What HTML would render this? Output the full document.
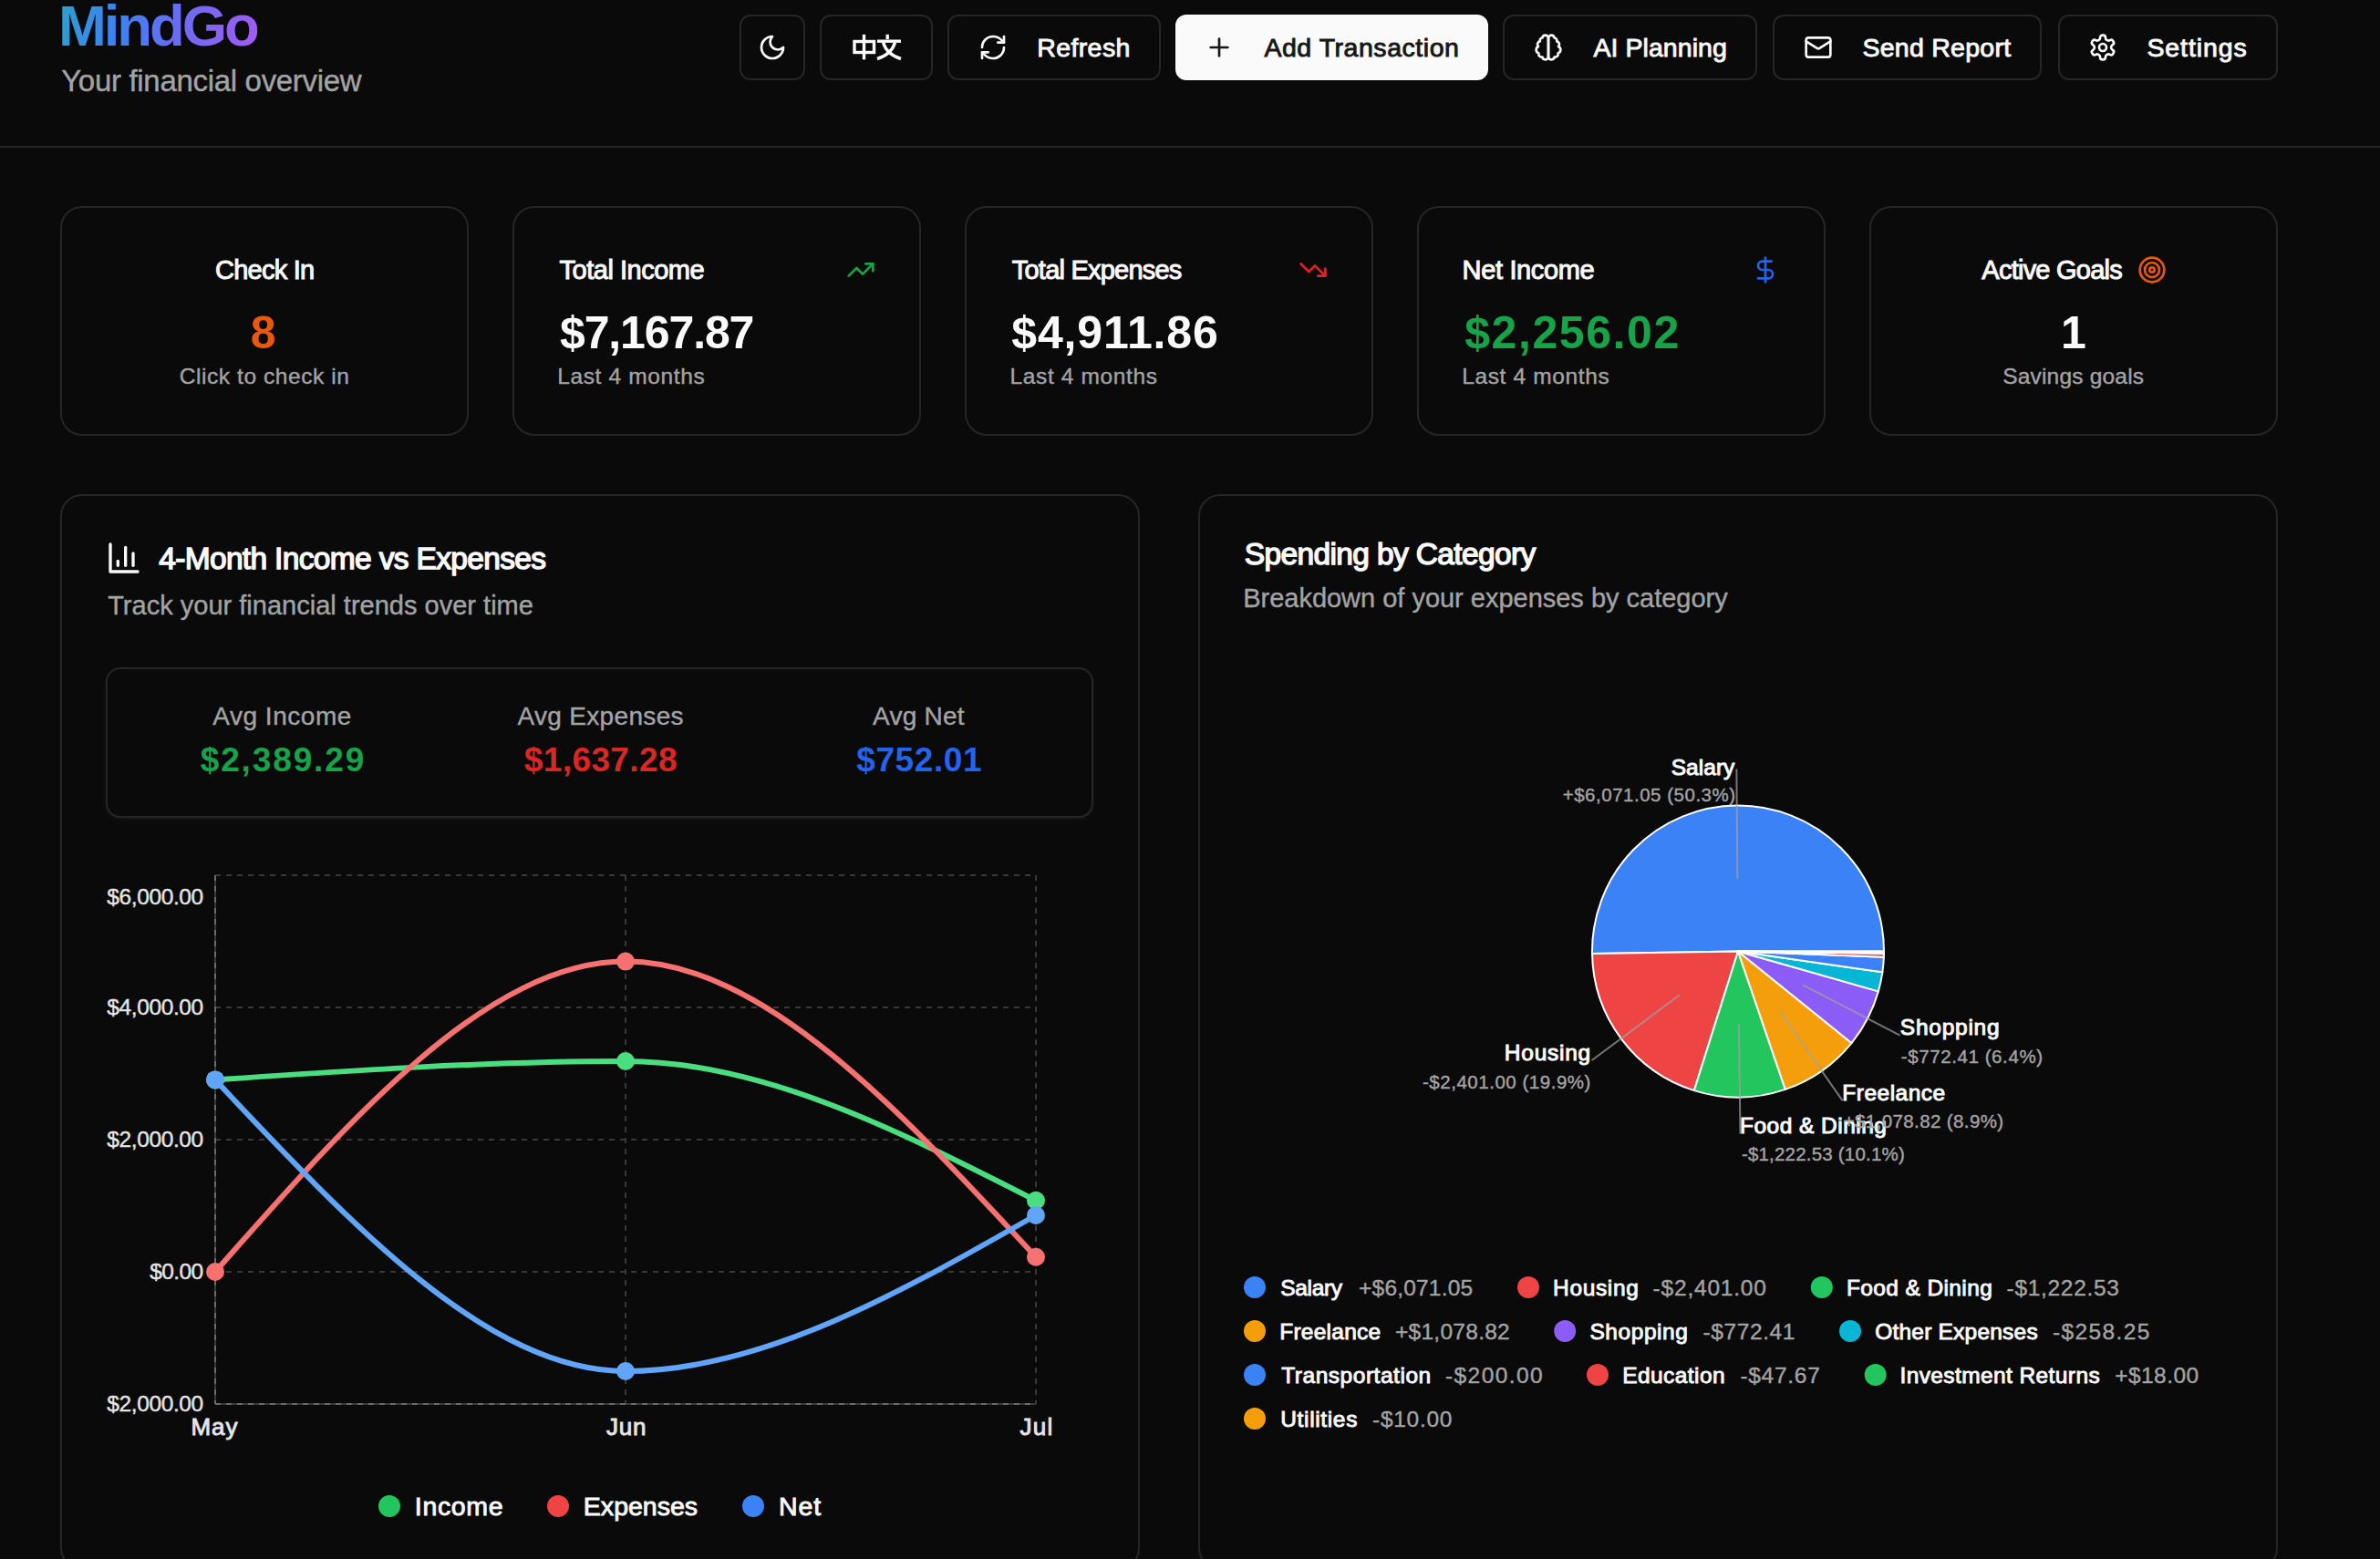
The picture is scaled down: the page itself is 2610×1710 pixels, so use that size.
<!DOCTYPE html>
<html><head><meta charset="utf-8"><title>MindGo</title>
<style>
html,body{margin:0;padding:0;background:#0a0a0a;width:2610px;height:1710px;overflow:hidden;}
body{position:relative;font-family:"Liberation Sans",sans-serif;}
.t{position:absolute;white-space:nowrap;line-height:0;}
.grad{background:linear-gradient(100deg,#2fa0cc 0%,#3b82f6 30%,#6a6cf3 60%,#a35bf5 100%);-webkit-background-clip:text;background-clip:text;color:transparent;line-height:1;}
.bx{position:absolute;box-sizing:border-box;border:2px solid;}
.ov{position:absolute;left:0;top:0;}
.ic{position:absolute;}
</style></head><body>
<div class="bx" style="left:0px;top:160px;width:2610px;height:2px;border-radius:0px;background:#262626;border-color:transparent;border:none;"></div><div class="bx" style="left:811px;top:16px;width:72px;height:72px;border-radius:12px;background:#0a0a0a;border-color:#262626;"></div><div class="bx" style="left:899px;top:16px;width:124px;height:72px;border-radius:12px;background:#0a0a0a;border-color:#262626;"></div><div class="bx" style="left:1039px;top:16px;width:234px;height:72px;border-radius:12px;background:#0a0a0a;border-color:#262626;"></div><div class="bx" style="left:1289px;top:16px;width:343px;height:72px;border-radius:12px;background:#fafafa;border-color:#fafafa;"></div><div class="bx" style="left:1648px;top:16px;width:279px;height:72px;border-radius:12px;background:#0a0a0a;border-color:#262626;"></div><div class="bx" style="left:1944px;top:16px;width:295px;height:72px;border-radius:12px;background:#0a0a0a;border-color:#262626;"></div><div class="bx" style="left:2257px;top:16px;width:241px;height:72px;border-radius:12px;background:#0a0a0a;border-color:#262626;"></div><div class="bx" style="left:66px;top:226px;width:448px;height:252px;border-radius:24px;background:#0a0a0a;border-color:#262626;"></div><div class="bx" style="left:562px;top:226px;width:448px;height:252px;border-radius:24px;background:#0a0a0a;border-color:#262626;"></div><div class="bx" style="left:1058px;top:226px;width:448px;height:252px;border-radius:24px;background:#0a0a0a;border-color:#262626;"></div><div class="bx" style="left:1554px;top:226px;width:448px;height:252px;border-radius:24px;background:#0a0a0a;border-color:#262626;"></div><div class="bx" style="left:2050px;top:226px;width:448px;height:252px;border-radius:24px;background:#0a0a0a;border-color:#262626;"></div><div class="bx" style="left:66px;top:542px;width:1184px;height:1180px;border-radius:24px;background:#0a0a0a;border-color:#262626;"></div><div class="bx" style="left:1314px;top:542px;width:1184px;height:1180px;border-radius:24px;background:#0a0a0a;border-color:#262626;"></div><div class="bx" style="left:116px;top:732px;width:1083px;height:165px;border-radius:16px;background:#0a0a0a;border-color:#262626;box-shadow:0 2px 5px rgba(255,255,255,0.05),0 0 4px rgba(255,255,255,0.03);"></div>
<svg class="ov" width="2610" height="1710" viewBox="0 0 2610 1710"><line x1="236" y1="960" x2="1136" y2="960" stroke="#383838" stroke-width="2" stroke-dasharray="6 6"/><line x1="236" y1="1105" x2="1136" y2="1105" stroke="#383838" stroke-width="2" stroke-dasharray="6 6"/><line x1="236" y1="1250" x2="1136" y2="1250" stroke="#383838" stroke-width="2" stroke-dasharray="6 6"/><line x1="236" y1="1395" x2="1136" y2="1395" stroke="#383838" stroke-width="2" stroke-dasharray="6 6"/><line x1="686" y1="960" x2="686" y2="1540" stroke="#383838" stroke-width="2" stroke-dasharray="6 6"/><line x1="1136" y1="960" x2="1136" y2="1540" stroke="#383838" stroke-width="2" stroke-dasharray="6 6"/><line x1="236" y1="960" x2="236" y2="1540" stroke="#3a3a3a" stroke-width="2"/><line x1="236" y1="960" x2="236" y2="1540" stroke="#6b6b6b" stroke-width="2" stroke-dasharray="6 6"/><line x1="236" y1="1540" x2="1136" y2="1540" stroke="#3a3a3a" stroke-width="2"/><line x1="236" y1="1540" x2="1136" y2="1540" stroke="#6b6b6b" stroke-width="2" stroke-dasharray="6 6"/><path d="M236,1184.4C386.00,1174.20,536.00,1164.00,686,1164C836.00,1164.00,986.00,1240.40,1136,1316.8" fill="none" stroke="#4ade80" stroke-width="6" stroke-linecap="round"/><circle cx="236" cy="1184.4" r="10" fill="#4ade80"/><circle cx="686" cy="1164" r="10" fill="#4ade80"/><circle cx="1136" cy="1316.8" r="10" fill="#4ade80"/><path d="M236,1395C386.00,1224.80,536.00,1054.60,686,1054.6C836.00,1054.60,986.00,1216.70,1136,1378.8" fill="none" stroke="#f87171" stroke-width="6" stroke-linecap="round"/><circle cx="236" cy="1395" r="10" fill="#f87171"/><circle cx="686" cy="1054.6" r="10" fill="#f87171"/><circle cx="1136" cy="1378.8" r="10" fill="#f87171"/><path d="M236,1184.4C386.00,1344.20,536.00,1504.00,686,1504C836.00,1504.00,986.00,1418.50,1136,1333" fill="none" stroke="#60a5fa" stroke-width="6" stroke-linecap="round"/><circle cx="236" cy="1184.4" r="10" fill="#60a5fa"/><circle cx="686" cy="1504" r="10" fill="#60a5fa"/><circle cx="1136" cy="1333" r="10" fill="#60a5fa"/><circle cx="427" cy="1652" r="12" fill="#22c55e"/><circle cx="612" cy="1652" r="12" fill="#ef4444"/><circle cx="826" cy="1652" r="12" fill="#3b82f6"/><path d="M1906,1043.5L2066.00,1043.50A160,160 0 1 0 1746.02,1046.10Z" fill="#3b82f6" stroke="#ffffff" stroke-width="2" stroke-linejoin="round"/><path d="M1906,1043.5L1746.02,1046.10A160,160 0 0 0 1857.84,1196.08Z" fill="#ef4444" stroke="#ffffff" stroke-width="2" stroke-linejoin="round"/><path d="M1906,1043.5L1857.84,1196.08A160,160 0 0 0 1957.87,1194.86Z" fill="#22c55e" stroke="#ffffff" stroke-width="2" stroke-linejoin="round"/><path d="M1906,1043.5L1957.87,1194.86A160,160 0 0 0 2030.46,1144.04Z" fill="#f59e0b" stroke="#ffffff" stroke-width="2" stroke-linejoin="round"/><path d="M1906,1043.5L2030.46,1144.04A160,160 0 0 0 2059.87,1087.37Z" fill="#8b5cf6" stroke="#ffffff" stroke-width="2" stroke-linejoin="round"/><path d="M1906,1043.5L2059.87,1087.37A160,160 0 0 0 2064.36,1066.36Z" fill="#06b6d4" stroke="#ffffff" stroke-width="2" stroke-linejoin="round"/><path d="M1906,1043.5L2064.36,1066.36A160,160 0 0 0 2065.88,1049.80Z" fill="#3b82f6" stroke="#ffffff" stroke-width="2" stroke-linejoin="round"/><path d="M1906,1043.5L2065.88,1049.80A160,160 0 0 0 2065.98,1045.83Z" fill="#ef4444" stroke="#ffffff" stroke-width="2" stroke-linejoin="round"/><path d="M1906,1043.5L2065.98,1045.83A160,160 0 0 0 2066.00,1044.33Z" fill="#22c55e" stroke="#ffffff" stroke-width="2" stroke-linejoin="round"/><path d="M1906,1043.5L2066.00,1044.33A160,160 0 0 0 2066.00,1043.50Z" fill="#f59e0b" stroke="#ffffff" stroke-width="2" stroke-linejoin="round"/><line x1="1905.35" y1="963.50" x2="1904.38" y2="843.51" stroke="#a3a3a3" stroke-opacity="0.7" stroke-width="2"/><line x1="1841.86" y1="1091.32" x2="1745.66" y2="1163.04" stroke="#a3a3a3" stroke-opacity="0.7" stroke-width="2"/><line x1="1906.98" y1="1123.49" x2="1908.45" y2="1243.49" stroke="#a3a3a3" stroke-opacity="0.7" stroke-width="2"/><line x1="1951.88" y1="1109.04" x2="2020.70" y2="1207.34" stroke="#a3a3a3" stroke-opacity="0.7" stroke-width="2"/><line x1="1977.01" y1="1080.34" x2="2083.53" y2="1135.61" stroke="#a3a3a3" stroke-opacity="0.7" stroke-width="2"/><circle cx="1376" cy="1412" r="12" fill="#3b82f6"/><circle cx="1676" cy="1412" r="12" fill="#ef4444"/><circle cx="1997.8" cy="1412" r="12" fill="#22c55e"/><circle cx="1376" cy="1460" r="12" fill="#f59e0b"/><circle cx="1716.2" cy="1460" r="12" fill="#8b5cf6"/><circle cx="2029" cy="1460" r="12" fill="#06b6d4"/><circle cx="1376" cy="1508" r="12" fill="#3b82f6"/><circle cx="1752" cy="1508" r="12" fill="#ef4444"/><circle cx="2056.7" cy="1508" r="12" fill="#22c55e"/><circle cx="1376" cy="1556" r="12" fill="#f59e0b"/></svg>
<svg class="ic" style="left:831px;top:36px" width="32" height="32" viewBox="0 0 24 24" fill="none" stroke="#fafafa" stroke-width="2" stroke-linecap="round" stroke-linejoin="round"><path d="M12 3a6 6 0 0 0 9 9 9 9 0 1 1-9-9Z"/></svg><svg class="ic" style="left:1073px;top:36px" width="32" height="32" viewBox="0 0 24 24" fill="none" stroke="#fafafa" stroke-width="2" stroke-linecap="round" stroke-linejoin="round"><path d="M3 12a9 9 0 0 1 9-9 9.75 9.75 0 0 1 6.74 2.74L21 8"/><path d="M21 3v5h-5"/><path d="M21 12a9 9 0 0 1-9 9 9.75 9.75 0 0 1-6.74-2.74L3 16"/><path d="M8 16H3v5"/></svg><svg class="ic" style="left:1321px;top:36px" width="32" height="32" viewBox="0 0 24 24" fill="none" stroke="#171717" stroke-width="2" stroke-linecap="round" stroke-linejoin="round"><path d="M5 12h14"/><path d="M12 5v14"/></svg><svg class="ic" style="left:1682px;top:36px" width="32" height="32" viewBox="0 0 24 24" fill="none" stroke="#fafafa" stroke-width="2" stroke-linecap="round" stroke-linejoin="round"><path d="M9.5 2A2.5 2.5 0 0 1 12 4.5v15a2.5 2.5 0 0 1-4.96.44 2.5 2.5 0 0 1-2.96-3.08 3 3 0 0 1-.34-5.58 2.5 2.5 0 0 1 1.32-4.24 2.5 2.5 0 0 1 1.98-3A2.5 2.5 0 0 1 9.5 2Z"/><path d="M14.5 2A2.5 2.5 0 0 0 12 4.5v15a2.5 2.5 0 0 0 4.96.44 2.5 2.5 0 0 0 2.96-3.08 3 3 0 0 0 .34-5.58 2.5 2.5 0 0 0-1.32-4.24 2.5 2.5 0 0 0-1.98-3A2.5 2.5 0 0 0 14.5 2Z"/></svg><svg class="ic" style="left:1978px;top:36px" width="32" height="32" viewBox="0 0 24 24" fill="none" stroke="#fafafa" stroke-width="2" stroke-linecap="round" stroke-linejoin="round"><rect width="20" height="16" x="2" y="4" rx="2"/><path d="m22 7-8.97 5.7a1.94 1.94 0 0 1-2.06 0L2 7"/></svg><svg class="ic" style="left:2290px;top:36px" width="32" height="32" viewBox="0 0 24 24" fill="none" stroke="#fafafa" stroke-width="2" stroke-linecap="round" stroke-linejoin="round"><path d="M12.22 2h-.44a2 2 0 0 0-2 2v.18a2 2 0 0 1-1 1.73l-.43.25a2 2 0 0 1-2 0l-.15-.08a2 2 0 0 0-2.73.73l-.22.38a2 2 0 0 0 .73 2.73l.15.1a2 2 0 0 1 1 1.72v.51a2 2 0 0 1-1 1.74l-.15.09a2 2 0 0 0-.73 2.73l.22.38a2 2 0 0 0 2.73.73l.15-.08a2 2 0 0 1 2 0l.43.25a2 2 0 0 1 1 1.73V20a2 2 0 0 0 2 2h.44a2 2 0 0 0 2-2v-.18a2 2 0 0 1 1-1.73l.43-.25a2 2 0 0 1 2 0l.15.08a2 2 0 0 0 2.73-.73l.22-.39a2 2 0 0 0-.73-2.73l-.15-.08a2 2 0 0 1-1-1.74v-.5a2 2 0 0 1 1-1.74l.15-.09a2 2 0 0 0 .73-2.73l-.22-.38a2 2 0 0 0-2.73-.73l-.15.08a2 2 0 0 1-2 0l-.43-.25a2 2 0 0 1-1-1.73V4a2 2 0 0 0-2-2z"/><circle cx="12" cy="12" r="3"/></svg><svg class="ic" style="left:930px;top:34px" width="64" height="36" viewBox="0 0 64 36" fill="none" stroke="#fafafa" stroke-width="3.4" stroke-linecap="butt"><rect x="7" y="11.5" width="21.5" height="12" /><line x1="17.5" y1="3.8" x2="17.5" y2="31.3"/><line x1="43.2" y1="3.8" x2="43.2" y2="9"/><line x1="32" y1="11.2" x2="58" y2="11.2"/><path d="M38.5 12.5 C41 21 48 27.5 58 30.5"/><path d="M51.5 12.5 C49 21 42 27.5 32 30.5"/></svg><svg class="ic" style="left:928px;top:280px" width="32" height="32" viewBox="0 0 24 24" fill="none" stroke="#16a34a" stroke-width="2" stroke-linecap="round" stroke-linejoin="round"><polyline points="22 7 13.5 15.5 8.5 10.5 2 17"/><polyline points="16 7 22 7 22 13"/></svg><svg class="ic" style="left:1424px;top:280px" width="32" height="32" viewBox="0 0 24 24" fill="none" stroke="#dc2626" stroke-width="2" stroke-linecap="round" stroke-linejoin="round"><polyline points="22 17 13.5 8.5 8.5 13.5 2 7"/><polyline points="16 17 22 17 22 11"/></svg><svg class="ic" style="left:1920px;top:280px" width="32" height="32" viewBox="0 0 24 24" fill="none" stroke="#2563eb" stroke-width="2" stroke-linecap="round" stroke-linejoin="round"><line x1="12" x2="12" y1="2" y2="22"/><path d="M17 5H9.5a3.5 3.5 0 0 0 0 7h5a3.5 3.5 0 0 1 0 7H6"/></svg><svg class="ic" style="left:2344px;top:280px" width="32" height="32" viewBox="0 0 24 24" fill="none" stroke="#ea580c" stroke-width="2" stroke-linecap="round" stroke-linejoin="round"><circle cx="12" cy="12" r="10"/><circle cx="12" cy="12" r="6"/><circle cx="12" cy="12" r="2"/></svg><svg class="ic" style="left:116px;top:592px" width="40" height="40" viewBox="0 0 24 24" fill="none" stroke="#fafafa" stroke-width="2" stroke-linecap="round" stroke-linejoin="round"><path d="M3 3v18h18"/><path d="M18 17V9"/><path d="M13 17V5"/><path d="M8 17v-3"/></svg>
<div class="t grad" style="left:64.00px;top:-2.75px;font-size:63.5px;letter-spacing:-3.101px;font-weight:700;">MindGo</div><div class="t" style="left:67.20px;top:88.87px;font-size:33px;letter-spacing:-0.312px;-webkit-text-stroke:0.4px currentColor;color:#a3a3a3;">Your financial overview</div><div class="t" style="left:1137.15px;top:52.12px;font-size:28.5px;letter-spacing:0.410px;-webkit-text-stroke:0.9px currentColor;color:#fafafa;">Refresh</div><div class="t" style="left:1386.45px;top:52.12px;font-size:28.5px;letter-spacing:0.534px;-webkit-text-stroke:0.9px currentColor;color:#171717;">Add Transaction</div><div class="t" style="left:1747.45px;top:52.12px;font-size:28.5px;letter-spacing:0.058px;-webkit-text-stroke:0.9px currentColor;color:#fafafa;">AI Planning</div><div class="t" style="left:2042.45px;top:52.12px;font-size:28.5px;letter-spacing:0.260px;-webkit-text-stroke:0.9px currentColor;color:#fafafa;">Send Report</div><div class="t" style="left:2354.45px;top:52.12px;font-size:28.5px;letter-spacing:0.910px;-webkit-text-stroke:0.9px currentColor;color:#fafafa;">Settings</div><div class="t" style="left:236.00px;top:296.15px;font-size:29px;letter-spacing:-0.759px;-webkit-text-stroke:1.0px currentColor;color:#fafafa;">Check In</div><div class="t" style="left:274.80px;top:365.38px;font-size:50px;letter-spacing:0.000px;font-weight:700;color:#ea580c;">8</div><div class="t" style="left:196.70px;top:412.51px;font-size:24.5px;letter-spacing:0.576px;-webkit-text-stroke:0.4px currentColor;color:#a3a3a3;">Click to check in</div><div class="t" style="left:613.50px;top:296.15px;font-size:29px;letter-spacing:-0.480px;-webkit-text-stroke:1.0px currentColor;color:#fafafa;">Total Income</div><div class="t" style="left:614.00px;top:365.38px;font-size:50px;letter-spacing:-1.129px;font-weight:700;color:#fafafa;">$7,167.87</div><div class="t" style="left:611.20px;top:412.51px;font-size:24.5px;letter-spacing:0.638px;-webkit-text-stroke:0.4px currentColor;color:#a3a3a3;">Last 4 months</div><div class="t" style="left:1109.80px;top:296.15px;font-size:29px;letter-spacing:-0.782px;-webkit-text-stroke:1.0px currentColor;color:#fafafa;">Total Expenses</div><div class="t" style="left:1109.30px;top:365.38px;font-size:50px;letter-spacing:0.854px;font-weight:700;color:#fafafa;">$4,911.86</div><div class="t" style="left:1107.50px;top:412.51px;font-size:24.5px;letter-spacing:0.638px;-webkit-text-stroke:0.4px currentColor;color:#a3a3a3;">Last 4 months</div><div class="t" style="left:1603.60px;top:296.15px;font-size:29px;letter-spacing:-0.351px;-webkit-text-stroke:1.0px currentColor;color:#fafafa;">Net Income</div><div class="t" style="left:1606.20px;top:365.38px;font-size:50px;letter-spacing:1.571px;font-weight:700;color:#16a34a;">$2,256.02</div><div class="t" style="left:1603.20px;top:412.51px;font-size:24.5px;letter-spacing:0.638px;-webkit-text-stroke:0.4px currentColor;color:#a3a3a3;">Last 4 months</div><div class="t" style="left:2173.30px;top:296.15px;font-size:29px;letter-spacing:-0.753px;-webkit-text-stroke:1.0px currentColor;color:#fafafa;">Active Goals</div><div class="t" style="left:2260.00px;top:365.38px;font-size:50px;letter-spacing:0.000px;font-weight:700;color:#fafafa;">1</div><div class="t" style="left:2196.20px;top:412.51px;font-size:24.5px;letter-spacing:0.193px;-webkit-text-stroke:0.4px currentColor;color:#a3a3a3;">Savings goals</div><div class="t" style="left:174.20px;top:612.89px;font-size:33.5px;letter-spacing:-0.658px;-webkit-text-stroke:1.4px currentColor;color:#fafafa;">4-Month Income vs Expenses</div><div class="t" style="left:118.20px;top:664.15px;font-size:29px;letter-spacing:0.011px;-webkit-text-stroke:0.4px currentColor;color:#a3a3a3;">Track your financial trends over time</div><div class="t" style="left:233.20px;top:785.90px;font-size:28px;letter-spacing:0.537px;-webkit-text-stroke:0.4px currentColor;color:#a3a3a3;">Avg Income</div><div class="t" style="left:567.45px;top:785.90px;font-size:28px;letter-spacing:0.329px;-webkit-text-stroke:0.4px currentColor;color:#a3a3a3;">Avg Expenses</div><div class="t" style="left:957.10px;top:785.90px;font-size:28px;letter-spacing:0.214px;-webkit-text-stroke:0.4px currentColor;color:#a3a3a3;">Avg Net</div><div class="t" style="left:219.70px;top:834.48px;font-size:37px;letter-spacing:1.872px;font-weight:700;color:#16a34a;">$2,389.29</div><div class="t" style="left:574.80px;top:834.48px;font-size:37px;letter-spacing:0.397px;font-weight:700;color:#dc2626;">$1,637.28</div><div class="t" style="left:939.25px;top:834.48px;font-size:37px;letter-spacing:0.589px;font-weight:700;color:#2563eb;">$752.01</div><div class="t" style="left:117.20px;top:983.51px;font-size:24.5px;letter-spacing:-0.371px;-webkit-text-stroke:0.4px currentColor;color:#e5e5e5;">$6,000.00</div><div class="t" style="left:117.20px;top:1104.71px;font-size:24.5px;letter-spacing:-0.371px;-webkit-text-stroke:0.4px currentColor;color:#e5e5e5;">$4,000.00</div><div class="t" style="left:117.20px;top:1250.01px;font-size:24.5px;letter-spacing:-0.371px;-webkit-text-stroke:0.4px currentColor;color:#e5e5e5;">$2,000.00</div><div class="t" style="left:164.20px;top:1395.01px;font-size:24.5px;letter-spacing:-0.621px;-webkit-text-stroke:0.4px currentColor;color:#e5e5e5;">$0.00</div><div class="t" style="left:117.20px;top:1540.01px;font-size:24.5px;letter-spacing:-0.371px;-webkit-text-stroke:0.4px currentColor;color:#e5e5e5;">$2,000.00</div><div class="t" style="left:209.45px;top:1564.99px;font-size:26px;letter-spacing:0.991px;-webkit-text-stroke:0.9px currentColor;color:#e5e5e5;">May</div><div class="t" style="left:664.95px;top:1564.99px;font-size:26px;letter-spacing:0.820px;-webkit-text-stroke:0.9px currentColor;color:#e5e5e5;">Jun</div><div class="t" style="left:1118.60px;top:1564.99px;font-size:26px;letter-spacing:1.170px;-webkit-text-stroke:0.9px currentColor;color:#e5e5e5;">Jul</div><div class="t" style="left:454.85px;top:1652.12px;font-size:28.5px;letter-spacing:0.658px;-webkit-text-stroke:0.9px currentColor;color:#fafafa;">Income</div><div class="t" style="left:639.85px;top:1652.12px;font-size:28.5px;letter-spacing:0.013px;-webkit-text-stroke:0.9px currentColor;color:#fafafa;">Expenses</div><div class="t" style="left:853.95px;top:1652.12px;font-size:28.5px;letter-spacing:0.984px;-webkit-text-stroke:0.9px currentColor;color:#fafafa;">Net</div><div class="t" style="left:1364.70px;top:608.39px;font-size:33.5px;letter-spacing:-0.629px;-webkit-text-stroke:1.4px currentColor;color:#fafafa;">Spending by Category</div><div class="t" style="left:1363.20px;top:656.05px;font-size:29px;letter-spacing:-0.013px;-webkit-text-stroke:0.4px currentColor;color:#a3a3a3;">Breakdown of your expenses by category</div><div class="t" style="left:1832.70px;top:841.51px;font-size:24.5px;letter-spacing:0.041px;-webkit-text-stroke:1.0px currentColor;color:#fafafa;">Salary</div><div class="t" style="left:1713.70px;top:871.90px;font-size:20.5px;letter-spacing:0.516px;-webkit-text-stroke:0.4px currentColor;color:#a3a3a3;">+$6,071.05 (50.3%)</div><div class="t" style="left:1649.80px;top:1155.31px;font-size:24.5px;letter-spacing:0.756px;-webkit-text-stroke:1.0px currentColor;color:#fafafa;">Housing</div><div class="t" style="left:1560.00px;top:1186.60px;font-size:20.5px;letter-spacing:0.525px;-webkit-text-stroke:0.4px currentColor;color:#a3a3a3;">-$2,401.00 (19.9%)</div><div class="t" style="left:1908.00px;top:1235.11px;font-size:24.5px;letter-spacing:0.473px;-webkit-text-stroke:1.0px currentColor;color:#fafafa;">Food &amp; Dining</div><div class="t" style="left:1909.90px;top:1266.30px;font-size:20.5px;letter-spacing:0.196px;-webkit-text-stroke:0.4px currentColor;color:#a3a3a3;">-$1,222.53 (10.1%)</div><div class="t" style="left:2020.30px;top:1199.11px;font-size:24.5px;letter-spacing:0.497px;-webkit-text-stroke:1.0px currentColor;color:#fafafa;">Freelance</div><div class="t" style="left:2021.70px;top:1230.30px;font-size:20.5px;letter-spacing:0.386px;-webkit-text-stroke:0.4px currentColor;color:#a3a3a3;">+$1,078.82 (8.9%)</div><div class="t" style="left:2083.80px;top:1127.11px;font-size:24.5px;letter-spacing:0.755px;-webkit-text-stroke:1.0px currentColor;color:#fafafa;">Shopping</div><div class="t" style="left:2084.80px;top:1158.50px;font-size:20.5px;letter-spacing:0.587px;-webkit-text-stroke:0.4px currentColor;color:#a3a3a3;">-$772.41 (6.4%)</div><div class="t" style="left:1404.25px;top:1412.51px;font-size:24.5px;letter-spacing:-0.319px;-webkit-text-stroke:0.9px currentColor;color:#fafafa;">Salary</div><div class="t" style="left:1490.10px;top:1412.51px;font-size:24.5px;letter-spacing:0.192px;-webkit-text-stroke:0.4px currentColor;color:#a3a3a3;">+$6,071.05</div><div class="t" style="left:1703.05px;top:1412.51px;font-size:24.5px;letter-spacing:0.639px;-webkit-text-stroke:0.9px currentColor;color:#fafafa;">Housing</div><div class="t" style="left:1812.60px;top:1412.51px;font-size:24.5px;letter-spacing:0.797px;-webkit-text-stroke:0.4px currentColor;color:#a3a3a3;">-$2,401.00</div><div class="t" style="left:2024.95px;top:1412.51px;font-size:24.5px;letter-spacing:0.381px;-webkit-text-stroke:0.9px currentColor;color:#fafafa;">Food &amp; Dining</div><div class="t" style="left:2200.60px;top:1412.51px;font-size:24.5px;letter-spacing:0.686px;-webkit-text-stroke:0.4px currentColor;color:#a3a3a3;">-$1,222.53</div><div class="t" style="left:1403.25px;top:1460.51px;font-size:24.5px;letter-spacing:0.247px;-webkit-text-stroke:0.9px currentColor;color:#fafafa;">Freelance</div><div class="t" style="left:1530.00px;top:1460.51px;font-size:24.5px;letter-spacing:0.269px;-webkit-text-stroke:0.4px currentColor;color:#a3a3a3;">+$1,078.82</div><div class="t" style="left:1743.45px;top:1460.51px;font-size:24.5px;letter-spacing:0.555px;-webkit-text-stroke:0.9px currentColor;color:#fafafa;">Shopping</div><div class="t" style="left:1867.60px;top:1460.51px;font-size:24.5px;letter-spacing:0.587px;-webkit-text-stroke:0.4px currentColor;color:#a3a3a3;">-$772.41</div><div class="t" style="left:2056.15px;top:1460.51px;font-size:24.5px;letter-spacing:0.221px;-webkit-text-stroke:0.9px currentColor;color:#fafafa;">Other Expenses</div><div class="t" style="left:2250.90px;top:1460.51px;font-size:24.5px;letter-spacing:1.401px;-webkit-text-stroke:0.4px currentColor;color:#a3a3a3;">-$258.25</div><div class="t" style="left:1405.25px;top:1508.51px;font-size:24.5px;letter-spacing:0.528px;-webkit-text-stroke:0.9px currentColor;color:#fafafa;">Transportation</div><div class="t" style="left:1585.00px;top:1508.51px;font-size:24.5px;letter-spacing:1.415px;-webkit-text-stroke:0.4px currentColor;color:#a3a3a3;">-$200.00</div><div class="t" style="left:1779.25px;top:1508.51px;font-size:24.5px;letter-spacing:0.419px;-webkit-text-stroke:0.9px currentColor;color:#fafafa;">Education</div><div class="t" style="left:1908.40px;top:1508.51px;font-size:24.5px;letter-spacing:0.722px;-webkit-text-stroke:0.4px currentColor;color:#a3a3a3;">-$47.67</div><div class="t" style="left:2083.45px;top:1508.51px;font-size:24.5px;letter-spacing:0.401px;-webkit-text-stroke:0.9px currentColor;color:#fafafa;">Investment Returns</div><div class="t" style="left:2319.20px;top:1508.51px;font-size:24.5px;letter-spacing:0.447px;-webkit-text-stroke:0.4px currentColor;color:#a3a3a3;">+$18.00</div><div class="t" style="left:1404.25px;top:1556.51px;font-size:24.5px;letter-spacing:0.649px;-webkit-text-stroke:0.9px currentColor;color:#fafafa;">Utilities</div><div class="t" style="left:1505.10px;top:1556.51px;font-size:24.5px;letter-spacing:0.705px;-webkit-text-stroke:0.4px currentColor;color:#a3a3a3;">-$10.00</div>
</body></html>
